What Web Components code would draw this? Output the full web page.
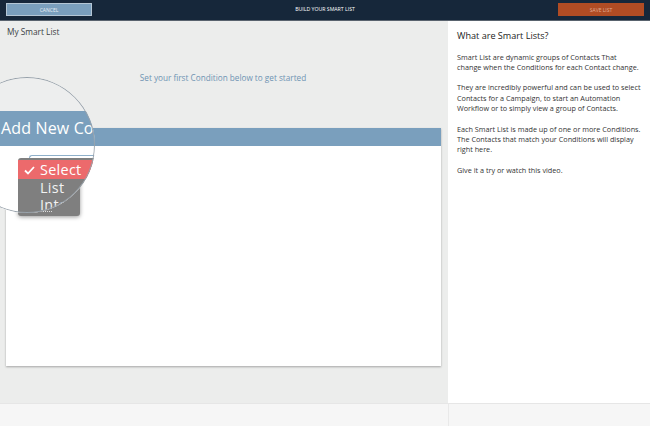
<!DOCTYPE html>
<html>
<head>
<meta charset="utf-8">
<style>
    html, body { margin: 0; height: 100%; }
    body { width: 650px; height: 426px; overflow: hidden; font-family: "Open Sans", sans-serif; }
</style>
</head>
<body>
<list-builder></list-builder>
<script>
class TopBar extends HTMLElement {
    constructor() {
        super();
        this.attachShadow({ mode: 'open' }).innerHTML = `
        <style>
            :host { display: grid; grid-template-columns: 1fr 1fr 1fr; align-items: start; height: 17px; background: #16273a; border-bottom: 1px solid #59636e; padding: 3px 6px 0; color: #fff; width: 638px; }
            .title { text-align: center; font-size: 5.2px; line-height: 13px; font-weight: 400; }
            button { display: block; width: 86px; height: 13px; border: 0; padding: 0; font: 400 5px "Open Sans", sans-serif; }
            .cancel { background: #7a9fbd; color: #e8eef3; border: 1px solid #b4c6d5; box-sizing: border-box; }
            .save { margin-left: auto; background: #b04c24; color: #e2ad95; }
        </style>
        <button class="cancel">CANCEL</button>
        <div class="title">BUILD YOUR SMART LIST</div>
        <button class="save">SAVE LIST</button>`;
    }
}
class HelpPanel extends HTMLElement {
    constructor() {
        super();
        this.attachShadow({ mode: 'open' }).innerHTML = `
        <style>
            :host { display: block; background: #fff; padding: 8px 0 0 9px; color: #333; font-size: 7.25px; line-height: 10.3px; }
            h2 { margin: 0 0 8.6px; font-size: 9.1px; line-height: 14px; font-weight: 400; color: #222; }
            ::slotted(p) { margin: 0 0 10.3px; white-space: nowrap; }
        </style>
        <h2>What are Smart Lists?</h2>
        <slot></slot>`;
    }
}
class ConditionCard extends HTMLElement {
    constructor() {
        super();
        this.attachShadow({ mode: 'open' }).innerHTML = `
        <style>
            :host { display: flex; flex-direction: column; height: 238px; margin: 0 7px 0 6px; background: #fff; box-shadow: 0 1px 2px rgba(0,0,0,.3); }
            .bar { height: 18px; background: #7a9fbd; }
        </style>
        <div class="bar"></div>`;
    }
}
class PickMenu extends HTMLElement {
    constructor() {
        super();
        this.attachShadow({ mode: 'open' }).innerHTML = `
        <style>
            :host { position: absolute; left: 18px; top: 137px; width: 62px; height: 58px; background: #7f7f7f; border-radius: 3px; box-shadow: 0 1px 4px rgba(0,0,0,.4); }
            .dots { position: absolute; left: 25px; top: 53px; width: 9px; border-top: 1px dotted #ddd; }
        </style>
        <div class="dots"></div>`;
    }
}
class MagnifyLens extends HTMLElement {
    constructor() {
        super();
        this.attachShadow({ mode: 'open' }).innerHTML = `
        <style>
            :host { position: absolute; left: -41px; top: 56px; width: 136px; height: 136px; border-radius: 50%; overflow: hidden; background: #edeeee; }
            .band { position: absolute; left: 0; right: 0; top: 34px; height: 35px; background: #7a9fbd; color: #fff; font-size: 16px; line-height: 35px; padding-left: 42px; white-space: nowrap; letter-spacing: .15px; }
            .white { position: absolute; left: 0; right: 0; top: 69px; bottom: 0; background: #fff; }
            .menu { position: absolute; left: 59px; right: 0; top: 81px; bottom: 0; background: #7f7f7f; border-top-left-radius: 3px; color: #f2f2f2; font-size: 14.4px; line-height: 17px; letter-spacing: .3px; padding-top: 2px; }
            .edge { position: absolute; left: 70px; right: 0; top: 78px; height: 3px; border-top: 1px solid #8fb0ca; border-left: 1px solid #8fb0ca; border-top-left-radius: 3px; box-sizing: border-box; }
            .menu div { padding-left: 22px; white-space: nowrap; }
            .menu .on { position: relative; height: 19px; line-height: 20px; background: #ec6a6c; color: #fff; }
            svg { position: absolute; left: 6px; top: 6px; }
            .ring { position: absolute; inset: 0; border-radius: 50%; box-shadow: inset 0 0 0 1px #98a2ab; }
        </style>
        <div class="band">Add New Co</div>
        <div class="white"></div>
        <div class="edge"></div>
        <div class="menu">
            <div class="on"><svg width="11" height="9" viewBox="0 0 11 9"><path d="M1 4.5 4 7.5 10 1" fill="none" stroke="#fff" stroke-width="1.8"/></svg>Select</div>
            <div>List</div>
            <div>Inte</div>
        </div>
        <div class="ring"></div>`;
    }
}
class ListBuilder extends HTMLElement {
    constructor() {
        super();
        this.attachShadow({ mode: 'open' }).innerHTML = `
        <style>
            :host { display: grid; grid-template-columns: 448px 202px; grid-template-rows: 21px 382px 23px; width: 650px; height: 426px; }
            top-bar { grid-column: 1 / 3; }
            .main { position: relative; background: #ecedec; color: #333; }
            .name { font-size: 8.3px; line-height: 13px; padding: 4px 0 0 7px; height: 46px; color: #3b3f44; }
            .hint { text-align: center; font-size: 8.2px; line-height: 14px; color: #6f94b3; height: 57px; padding-right: 2px; }
            .foot { background: #f6f6f6 radial-gradient(#e9e9e9 .6px, transparent .7px) 0 0 / 4px 4px; border-top: 1px solid #e6e6e6; }
            .foot + .foot { border-left: 1px solid #e9e9e9; }
        </style>
        <top-bar></top-bar>
        <div class="main">
            <div class="name">My Smart List</div>
            <div class="hint">Set your first Condition below to get started</div>
            <condition-card></condition-card>
            <pick-menu></pick-menu>
            <magnify-lens></magnify-lens>
        </div>
        <help-panel>
            <p>Smart List are dynamic groups of Contacts That<br>change when the Conditions for each Contact change.</p>
            <p>They are incredibly powerful and can be used to select<br>Contacts for a Campaign, to start an Automation<br>Workflow or to simply view a group of Contacts.</p>
            <p>Each Smart List is made up of one or more Conditions.<br>The Contacts that match your Conditions will display<br>right here.</p>
            <p>Give it a try or watch this video.</p>
        </help-panel>
        <div class="foot"></div>
        <div class="foot"></div>`;
    }
}
customElements.define('top-bar', TopBar);
customElements.define('help-panel', HelpPanel);
customElements.define('condition-card', ConditionCard);
customElements.define('pick-menu', PickMenu);
customElements.define('magnify-lens', MagnifyLens);
customElements.define('list-builder', ListBuilder);
</script>
</body>
</html>
